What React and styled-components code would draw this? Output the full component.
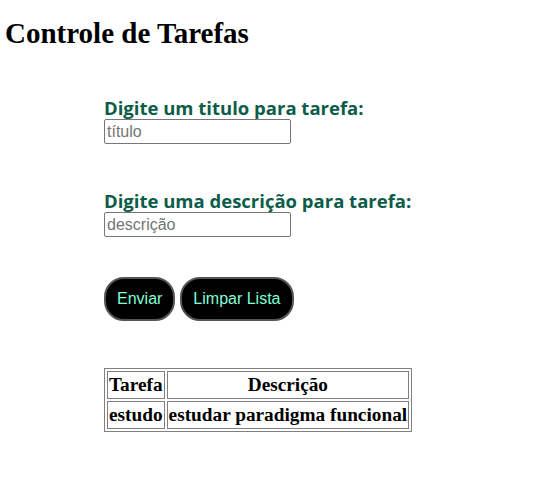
import React from 'react'
import styled, { createGlobalStyle } from 'styled-components'

const GlobalStyle = createGlobalStyle`
  body {
    margin: 0;
    background: #fff;
    font-family: 'Liberation Serif', 'Times New Roman', serif;
  }
`

const Page = styled.div`
  padding: 0 0 40px 5px;
`

const Title = styled.h1`
  font-family: 'Liberation Serif', serif;
  font-size: 29px;
  font-weight: bold;
  margin: 0;
  padding-top: 16px;
  line-height: 34px;
`

const Form = styled.div`
  margin-left: 99px;
  padding-top: 47px;
  display: flex;
  flex-direction: column;
`

const Field = styled.div`
  display: flex;
  flex-direction: column;
  align-items: flex-start;
  margin-bottom: ${(p) => p.$gap || 0}px;
`

const Label = styled.label`
  font-family: 'Open Sans', 'Lato', sans-serif;
  font-weight: 700;
  font-size: 18.5px;
  color: #0b5c49;
  line-height: 22px;
`

const Input = styled.input`
  width: 187px;
  height: 25px;
  box-sizing: border-box;
  border: 1px solid #767676;
  border-radius: 2px;
  padding: 1px 2px;
  font-family: 'Liberation Sans', Arial, sans-serif;
  font-size: 16px;
  &::placeholder {
    color: #757575;
  }
`

const Actions = styled.div`
  display: flex;
  gap: 5px;
  margin-top: 40px;
`

const Button = styled.button`
  height: 44px;
  padding: 0 11px;
  background: #000;
  color: #7fffd4;
  border: 2px solid #555;
  border-radius: 20px;
  font-family: 'Liberation Sans', Arial, sans-serif;
  font-size: 16px;
`

const Table = styled.table`
  margin-top: 47px;
  border: 1px solid #808080;
  border-spacing: 2px;
  font-family: 'Liberation Serif', serif;
  font-size: 19.3px;
  font-weight: bold;
  th, td {
    border: 1px solid #808080;
    padding: 1px;
    line-height: 24px;
  }
`

export default function App() {
  return (
    <>
      <GlobalStyle />
      <Page>
        <Title>Controle de Tarefas</Title>
        <Form>
          <Field $gap={46}>
            <Label>Digite um titulo para tarefa:</Label>
            <Input placeholder="título" />
          </Field>
          <Field>
            <Label>Digite uma descrição para tarefa:</Label>
            <Input placeholder="descrição" />
          </Field>
          <Actions>
            <Button>Enviar</Button>
            <Button>Limpar Lista</Button>
          </Actions>
          <div>
            <Table>
              <thead>
                <tr>
                  <th>Tarefa</th>
                  <th>Descrição</th>
                </tr>
              </thead>
              <tbody>
                <tr>
                  <td>estudo</td>
                  <td>estudar paradigma funcional</td>
                </tr>
              </tbody>
            </Table>
          </div>
        </Form>
      </Page>
    </>
  )
}
